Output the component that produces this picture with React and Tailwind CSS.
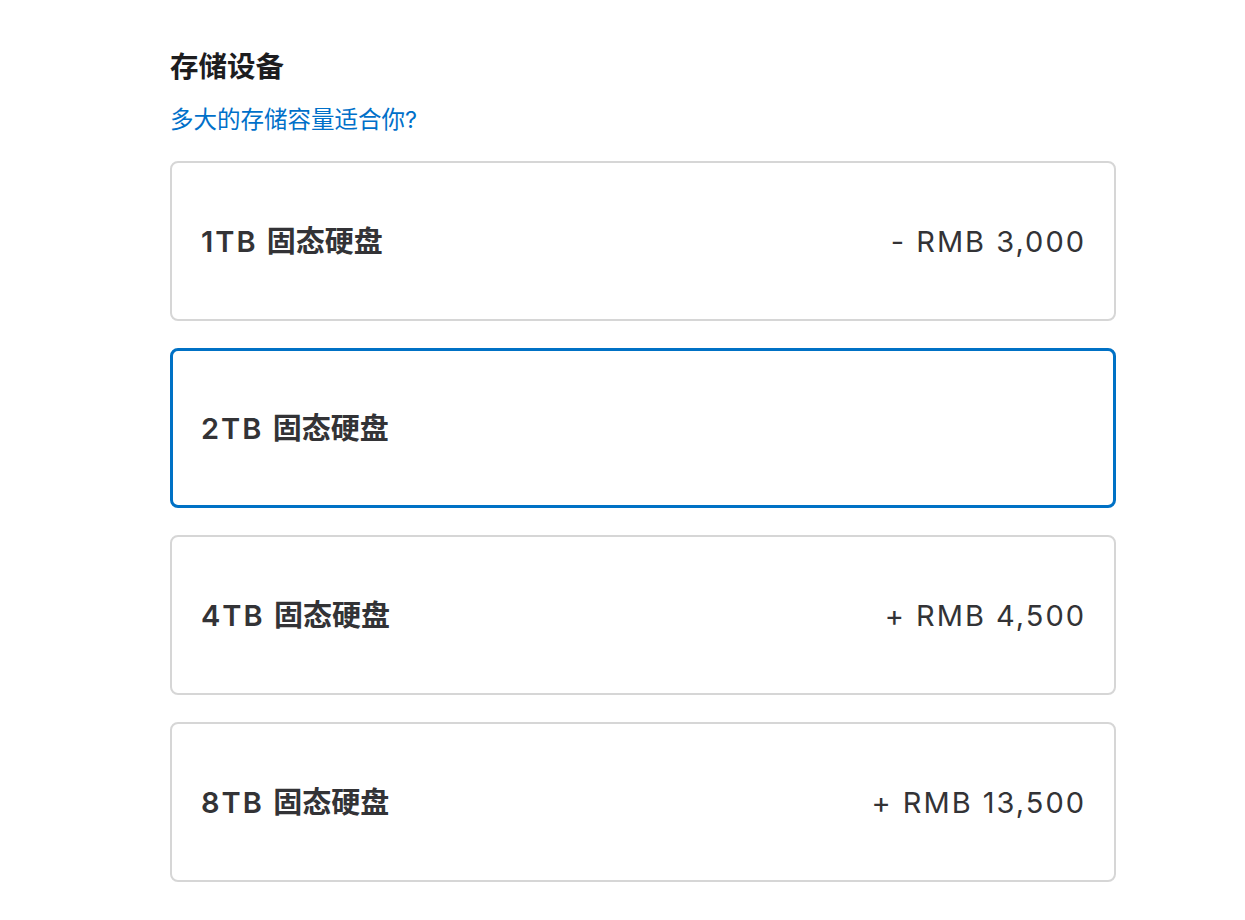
const options = [
  { size: '1TB', price: '- RMB 3,000' },
  { size: '2TB', price: '', selected: true },
  { size: '4TB', price: '+ RMB 4,500' },
  { size: '8TB', price: '+ RMB 13,500' },
];

export default function App() {
  return (
    <div
      className="min-h-[920px] w-[1245px] bg-white"
      style={{ fontFamily: 'Inter, "Noto Sans CJK SC", sans-serif' }}
    >
      <div className="ml-[170px] w-[946px] pt-[48px]">
        <h2 className="text-[28.5px] font-bold leading-[38px] text-[#1d1d1f]">存储设备</h2>
        <a href="#" className="mt-[19px] block text-[23.5px] leading-[30px] text-[#0070c9]">
          多大的存储容量适合你?
        </a>
        <div className="mt-[26px] flex flex-col gap-[27px]">
          {options.map((o) => (
            <div
              key={o.size}
              className={
                o.selected
                  ? 'flex h-[160px] items-center justify-between rounded-[8px] border-[3px] border-[#0071c5] pl-[28px] pr-[28px]'
                  : 'flex h-[160px] items-center justify-between rounded-[8px] border-2 border-[#d6d6d6] pl-[29px] pr-[28px]'
              }
            >
              <span className="pt-[2px] text-[29px] font-semibold text-[#333336]">
                <span className="tracking-[2px]">{o.size} </span>
                固态硬盘
              </span>
              <span className="pt-[2px] text-[29px] tracking-[2px] text-[#333336]">{o.price}</span>
            </div>
          ))}
        </div>
      </div>
    </div>
  );
}
